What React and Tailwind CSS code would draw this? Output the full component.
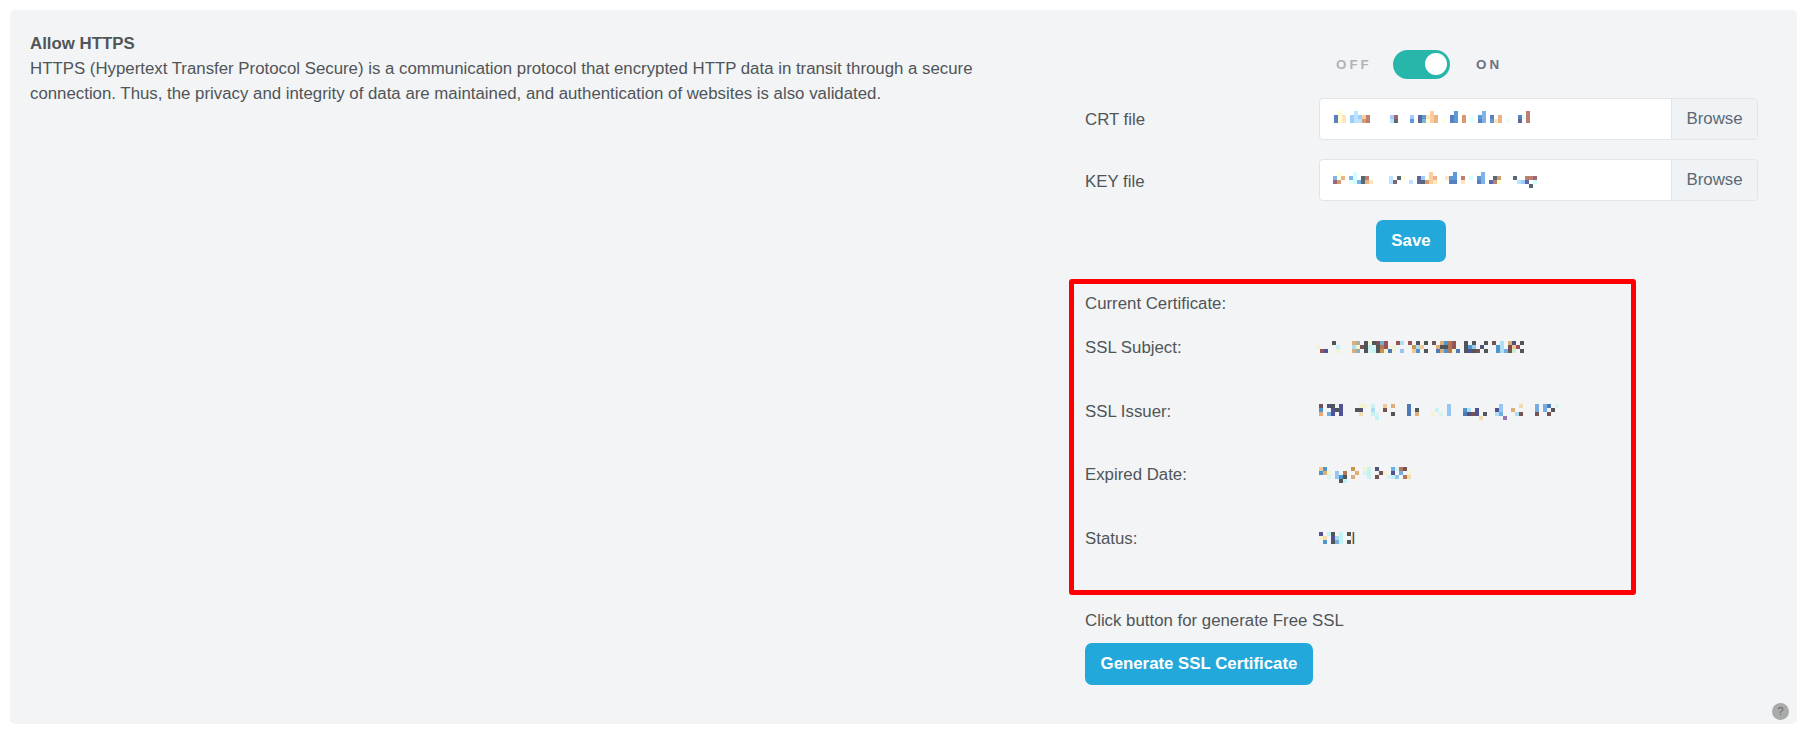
const palette = {
  b: '#5b80bf', y: '#ffffd0', Y: '#ffffe4', o: '#ffe4bc', s: '#9fcbff', c: '#bbe5ff', p: '#ffcc9f', r: '#bb8072',
  m: '#9e6672', B: '#5b9bd5', n: '#5b688f', l: '#7fb3e8', t: '#e8b48a', T: '#d69a72', e: '#e6ffff', d: '#d0ffff',
  g: '#5b6873', v: '#5b68a8', w: '#806672',
};

const panelPalette = {
  b: '#4f79b5', y: '#f3f3cf', o: '#f3dbb0', s: '#94c7f3', c: '#addff3', p: '#f3c796', m: '#755254',
  M: '#965254', B: '#4f94cd', n: '#505278', N: '#505296', l: '#74aee0', t: '#dfae78', e: '#d9f3f3', d: '#c5f3f3',
  g: '#505558', R: '#b27754', G: '#c99450', k: '#aeae96', K: '#94aeb0', L: '#c5f3c5', u: '#9674b5', a: '#f2f2de',
};

const crtRows = [
  ' y   c                  p     B      l          r',
  'byo scspr     sm   s nBopt   bB T e Bl b t    ber',
  'byo sccTr     cg   B nlypt Y bB T e bl Bot e  n r',
];
const keyRows = [
  ' y   d                  p     B      l',
  'lYt ld gr     c gY   nsYpt  oBB r d Bl  gT   g  rrm',
  'mT  edlgto    cw   c ngTpoY  bb o   bl vry    csv d',
  '                                                 g',
];
const subjectRows = [
  '    g    tk gygmlM  Mc M g g m tBRM  g g  g m c tn g',
  'a    d   cymgdegRMaa    Gcp   tggRM  gBs n   Bc mpM',
  ' MN  y   tK gedgGyba s  pB g  btBRyb gNgm g  BclmL g',
];
const issuerRows = [
  'm ng N    yy d  p t   b         s            s    o   l lb e',
  'B  NgN   gn  c  m     b g    d  s   Bc N    Ns  t     l l g',
  't lN N    o  de   g   b t   y e s   bnmN g  cl   cm   m  m',
  '              d                         o     u',
];
const dateRows = [
  'pB      G  yd n   leRm',
  'Bty s R  t ed  my N l y',
  '  e sBg t   d m  eds Ro',
  '     gd',
];
const statusRows = ['N dg d g', 'yo Ncd ', ' B gld g'];

function Mosaic({ rows, colors, className, tail }) {
  const width = Math.max(...rows.map((r) => r.length)) * 4 + (tail ? 6 : 0);
  return (
    <svg className={className} width={width} height={rows.length * 4} shapeRendering="crispEdges" aria-hidden="true">
      {rows.flatMap((row, y) =>
        [...row].map((ch, x) =>
          ch === ' ' ? null : <rect key={x + '-' + y} x={x * 4} y={y * 4} width="4" height="4" fill={colors[ch]} />
        )
      )}
      {tail && (
        <>
          <path d="M32 4h1v4h-1z" fill="#f3dbb0" />
          <path d="M33 0h1v12h-1z" fill="#dfae78" />
          <path d="M34 0h1v12h-1z" fill="#505278" />
          <path d="M35 0h1v12h-1z" fill="#addff3" />
        </>
      )}
    </svg>
  );
}

function FileRow({ label, children, className, labelClass }) {
  return (
    <div className={'flex h-[42px] w-[673px] items-center ' + className}>
      <span className={'w-[234px] ' + labelClass}>{label}</span>
      <div className="flex h-[42px] w-[439px] overflow-hidden rounded-[4px] border border-[#e1e5e9] bg-white">
        <div className="flex-1">{children}</div>
        <button className="w-[86px] border-l border-[#e1e5e9] bg-[#eff3f6] pb-[1px] text-[#5c6873]">Browse</button>
      </div>
    </div>
  );
}

function CertRow({ label, children, className }) {
  return (
    <div className={'flex h-6 ' + className}>
      <span className="w-[234px] shrink-0">{label}</span>
      {children}
    </div>
  );
}

export default function App() {
  return (
    <div className="h-[737px] w-[1809px] bg-white p-[10px] font-['Liberation_Sans',Arial,sans-serif] text-[16.82px] leading-[25px] text-[#505558]">
      <main className="flex h-[714px] w-[1787px] rounded-[5px] bg-[#f2f4f6]">
        <section className="w-[1059px] pl-5 pt-[21px]">
          <h1 className="font-bold">Allow HTTPS</h1>
          <p className="w-[960px]">
            HTTPS (Hypertext Transfer Protocol Secure) is a communication protocol that encrypted HTTP data in transit through a secure
            <br />
            connection. Thus, the privacy and integrity of data are maintained, and authentication of websites is also validated.
          </p>
        </section>

        <section className="flex w-[728px] flex-col">
          <div className="ml-[267px] mt-10 flex h-[29px] items-center text-[13.4px] font-bold tracking-[3px]">
            <span className="w-[57px] text-[#afb4ba]">OFF</span>
            <span className="flex h-[29px] w-[57px] justify-end rounded-full bg-[#29b6aa] p-[3px]">
              <span className="h-[22px] w-[22px] rounded-full bg-white" />
            </span>
            <span className="ml-[26px] text-[#6b7280]">ON</span>
          </div>

          <FileRow label="CRT file" className="ml-4 mt-[19px]" labelClass="">
            <Mosaic rows={crtRows} colors={palette} className="ml-[14px] mt-[12px]" />
          </FileRow>
          <FileRow label="KEY file" className="ml-4 mt-[19px]" labelClass="pt-[2px]">
            <Mosaic rows={keyRows} colors={palette} className="ml-[13px] mt-[12px]" />
          </FileRow>

          <button className="ml-[307px] mt-[19px] h-[42px] w-[70px] rounded-[7px] bg-[#22a8da] pb-[2px] font-bold text-white">Save</button>

          <div className="mt-[17px] h-[316px] w-[567px] rounded-[3px] border-[5px] border-[#ff0000] pl-[11px] pt-[7px]">
            <div className="h-[25px]">Current Certificate:</div>
            <CertRow label="SSL Subject:" className="mt-[19px]">
              <Mosaic rows={subjectRows} colors={panelPalette} className="-ml-[3px] mt-[6px]" />
            </CertRow>
            <CertRow label="SSL Issuer:" className="mt-10">
              <Mosaic rows={issuerRows} colors={panelPalette} className="mt-[5px]" />
            </CertRow>
            <CertRow label="Expired Date:" className="mt-[39px]">
              <Mosaic rows={dateRows} colors={panelPalette} className="mt-[5px]" />
            </CertRow>
            <CertRow label="Status:" className="mt-10">
              <Mosaic rows={statusRows} colors={panelPalette} className="mt-[6px]" tail />
            </CertRow>
          </div>

          <p className="ml-4 mt-[13px]">Click button for generate Free SSL</p>
          <button className="ml-4 mt-[10px] h-[42px] w-[228px] rounded-[7px] bg-[#22a8da] pb-[2px] font-bold text-white">Generate SSL Certificate</button>

          <span className="ml-auto mr-2 mt-auto mb-1 flex h-[17px] w-[17px] items-center justify-center rounded-full bg-[#a9abaa] text-[11px] leading-none text-[#666]">
            ?
          </span>
        </section>
      </main>
    </div>
  );
}
